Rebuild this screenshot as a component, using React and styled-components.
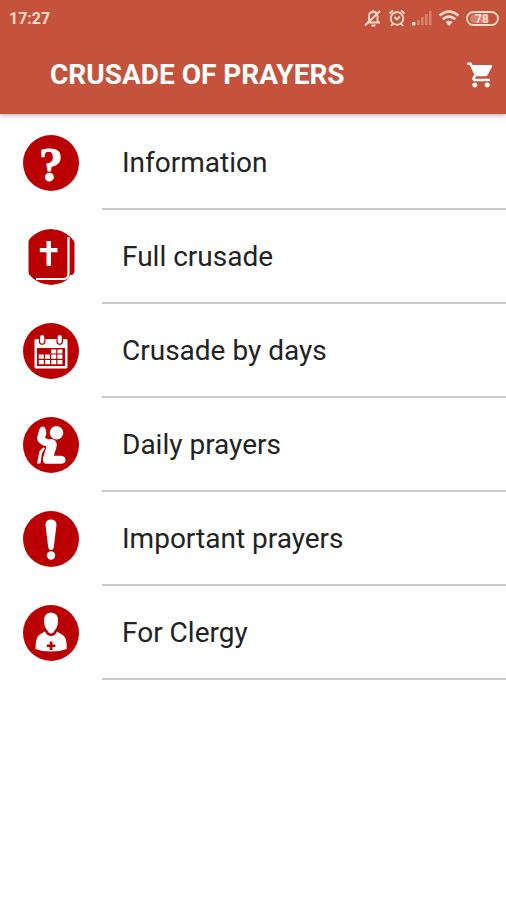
import React from "react";
import styled, { createGlobalStyle } from "styled-components";
import { MdShoppingCart } from "react-icons/md";

const red = "#bb0003";

const QuestionIcon = () => (
  <Icon viewBox="0 0 56 56" aria-hidden="true">
    <circle cx="28" cy="28" r="28" fill={red} />
    <text
      x="28"
      y="46"
      textAnchor="middle"
      fontFamily="Liberation Serif, serif"
      fontWeight="700"
      fontSize="48"
      fill="#fff"
      stroke="#fff"
      strokeWidth="0.800"
    >
      ?
    </text>
  </Icon>
);

const BookIcon = () => (
  <Icon viewBox="0 0 56 56" aria-hidden="true">
    <clipPath id="disc">
      <circle cx="28" cy="28" r="28" />
    </clipPath>
    <g clipPath="url(#disc)">
      <path
        d="M5.500 13Q5.500 8 12 4Q19 0 28 0Q40 0 45 6Q51.500 9 51.500 14V46H47Q45 56 28 56Q14 56 8 48Q5.500 47 5.500 42Z"
        fill={red}
      />
      <path d="M45.500 8V45Q45.500 50 40 50H13" fill="none" stroke="#fff" strokeWidth="2.200" />
    </g>
    <path d="M23.500 12h4.500v7h6.500v4.300H28v13.500h-4.500V23.300h-6.700V19h6.700z" fill="#fff" />
  </Icon>
);

const CalendarIcon = () => (
  <Icon viewBox="0 0 56 56" aria-hidden="true">
    <circle cx="28" cy="28" r="28" fill={red} />
    <rect x="11.500" y="16" width="33" height="29.500" rx="1.500" fill="#fff" />
    <path d="M14 25H42V43H14Z" fill={red} />
    <g fill="#fff" stroke={red} strokeWidth="1.200">
      <rect x="16.500" y="11.300" width="5.400" height="10" rx="2.700" />
      <rect x="34" y="11.300" width="5.400" height="10" rx="2.700" />
    </g>
    <g fill="#fff">
      <path d="M28.200 26.500h5v4h-5zM34.400 26.500h5v4h-5z" />
      <path d="M15.800 31.600h5v4.200h-5zM22 31.600h5v4.200h-5zM28.200 31.600h5v4.200h-5zM34.400 31.600h5v4.200h-5z" />
      <path d="M15.800 37h5v4.200h-5zM22 37h5v4.200h-5zM28.200 37h5v4.200h-5zM34.400 37h5v4.200h-5z" />
    </g>
  </Icon>
);

const KneelingIcon = () => (
  <Icon viewBox="0 0 56 56" aria-hidden="true">
    <circle cx="28" cy="28" r="28" fill={red} />
    <g fill="#fff">
      <circle cx="33.500" cy="15.800" r="6.800" />
      <path d="M16.500 12Q18.500 8.500 21.500 10Q24 13 23.300 17L22 20.500Q24.500 23 27.500 22Q34 22.500 33.700 28Q33.500 32 31.500 36L31 38.800H38Q42.500 39.200 42.500 43Q42.500 46.800 38 46.800H23Q19 46 20 41L23.500 29.500Q18.500 28.500 15.500 25Q13.200 22 14.800 18Z" />
      <path d="M20.500 30.500L16.500 34L14 46.500H17.500L18.800 37L22 31Z" />
    </g>
  </Icon>
);

const AlertIcon = () => (
  <Icon viewBox="0 0 56 56" aria-hidden="true">
    <circle cx="28" cy="28" r="28" fill={red} />
    <g fill="#fff">
      <path d="M22.500 14Q22.500 8.500 28 8.500Q33.500 8.500 33.500 14L30.800 36Q30.500 39 28 39Q25.500 39 25.200 36Z" />
      <circle cx="28" cy="44.500" r="4.200" />
    </g>
  </Icon>
);

const ClergyIcon = () => (
  <Icon viewBox="0 0 56 56" aria-hidden="true">
    <circle cx="28" cy="28" r="28" fill={red} />
    <path
      d="M28 7.500Q35.500 8 35 16.500Q34.500 23 31.500 25.500Q30.500 28.500 28 28.500Q25.500 28.500 24.500 25.500Q21.500 23 21 16.500Q20.500 8 28 7.500Z"
      fill="#fff"
    />
    <path
      d="M22 26.500Q24 31 28 31Q32 31 34 26.500Q38 29 40.500 30.500Q44 34 43.800 44Q37 46.500 28 46.500Q19 46.500 12.500 44Q12.500 34 15.500 30.500Q18 28.500 22 26.500Z"
      fill="#fff"
    />
    <path d="M26.700 36.500h2.800v2.900h2.900v2.700h-2.900v2.900h-2.800v-2.900h-2.900v-2.700h2.900z" fill={red} />
  </Icon>
);

const StatusIcons = () => (
  <StatusDrawing viewBox="0 0 136 20" aria-hidden="true">
    <g fill="none" stroke="currentColor" strokeWidth="1.800">
      <path d="M2.500 14.500H16M5 14V8.500Q5 4 9.200 4Q13.500 4 13.500 8.500V14M9.200 2v2M7.500 17.500h4M1 17.500L16 3" />
      <circle cx="33" cy="10.500" r="6.300" />
      <path d="M30.500 9L33 11.500L36 8.500M25.500 5.500L29 2.500M40.500 5.500L37 2.500M29 15.500L27 18M37 15.500L39 18" />
    </g>
    <g fill="currentColor">
      <rect x="48" y="14" width="3.500" height="3.500" rx="1" />
      <g opacity="0.35">
        <rect x="53" y="12" width="2.500" height="5" />
        <rect x="57" y="9" width="2.500" height="8" />
        <rect x="61" y="6" width="2.500" height="11" />
        <rect x="65" y="3" width="2.500" height="14" />
      </g>
      <path d="M85 18L81.500 14Q85 11.300 88.500 14Z" />
    </g>
    <g fill="none" stroke="currentColor" strokeWidth="2.600">
      <path d="M75.500 7.500Q85 -0.500 94.500 7.500M78.700 11.300Q85 6 91.300 11.300" />
    </g>
    <rect x="103" y="4" width="31" height="13" rx="6.500" fill="none" stroke="currentColor" strokeWidth="1.800" />
    <path d="M110 6h14v9h-14q-4 -1 -4 -4.500t4 -4.500z" fill="currentColor" opacity="0.35" />
    <text
      x="118"
      y="15"
      textAnchor="middle"
      fontFamily="Roboto, sans-serif"
      fontWeight="700"
      fontSize="12"
      fill="currentColor"
    >
      78
    </text>
  </StatusDrawing>
);

const items = [
  { label: "Information", icon: QuestionIcon },
  { label: "Full crusade", icon: BookIcon },
  { label: "Crusade by days", icon: CalendarIcon },
  { label: "Daily prayers", icon: KneelingIcon },
  { label: "Important prayers", icon: AlertIcon },
  { label: "For Clergy", icon: ClergyIcon },
];

const App = () => {
  return (
    <>
      <GlobalStyle />
      <Header>
        <StatusBar>
          <time>17:27</time>
          <StatusIcons />
        </StatusBar>
        <Toolbar>
          <h1>CRUSADE OF PRAYERS</h1>
          <CartButton type="button" aria-label="Cart">
            <MdShoppingCart />
          </CartButton>
        </Toolbar>
      </Header>
      <Menu>
        {items.map(({ label, icon: ItemIcon }) => (
          <li key={label}>
            <MenuLink href="#">
              <ItemIcon />
              <Label>{label}</Label>
            </MenuLink>
          </li>
        ))}
      </Menu>
    </>
  );
};

export default App;

const GlobalStyle = createGlobalStyle`
  * {
    box-sizing: border-box;
  }

  body {
    margin: 0;
    background: #fff;
    font-family: Roboto, sans-serif;
  }
`;

const Header = styled.header`
  background: #c5533c;
  color: #fff;
  box-shadow: 0 1px 5px rgba(0, 0, 0, 0.35);
`;

const StatusBar = styled.div`
  display: flex;
  align-items: center;
  justify-content: space-between;
  height: 36px;
  padding: 0 6px 0 9px;
  color: #fbddd0;

  time {
    font-size: 16px;
    font-weight: 700;
  }
`;

const StatusDrawing = styled.svg`
  width: 136px;
  height: 20px;
`;

const Toolbar = styled.div`
  display: flex;
  align-items: center;
  justify-content: space-between;
  height: 78px;
  padding: 0 10px 0 50px;

  h1 {
    margin: 0;
    font-size: 28px;
    font-weight: 700;
    line-height: 32px;
  }
`;

const CartButton = styled.button`
  display: flex;
  padding: 0;
  border: 0;
  background: none;
  color: inherit;
  font-size: 30px;
  cursor: pointer;
`;

const Menu = styled.ul`
  margin: 0;
  padding: 2px 0 0;
  list-style: none;
`;

const MenuLink = styled.a`
  display: flex;
  align-items: center;
  gap: 23px;
  height: 94px;
  padding-left: 23px;
  color: #222;
  text-decoration: none;
`;

const Icon = styled.svg`
  flex: none;
  width: 56px;
  height: 56px;
  overflow: visible;
`;

const Label = styled.span`
  display: flex;
  flex: 1;
  align-items: center;
  align-self: stretch;
  padding-left: 20px;
  border-bottom: 2px solid #cbcbcb;
  font-size: 28px;
`;
